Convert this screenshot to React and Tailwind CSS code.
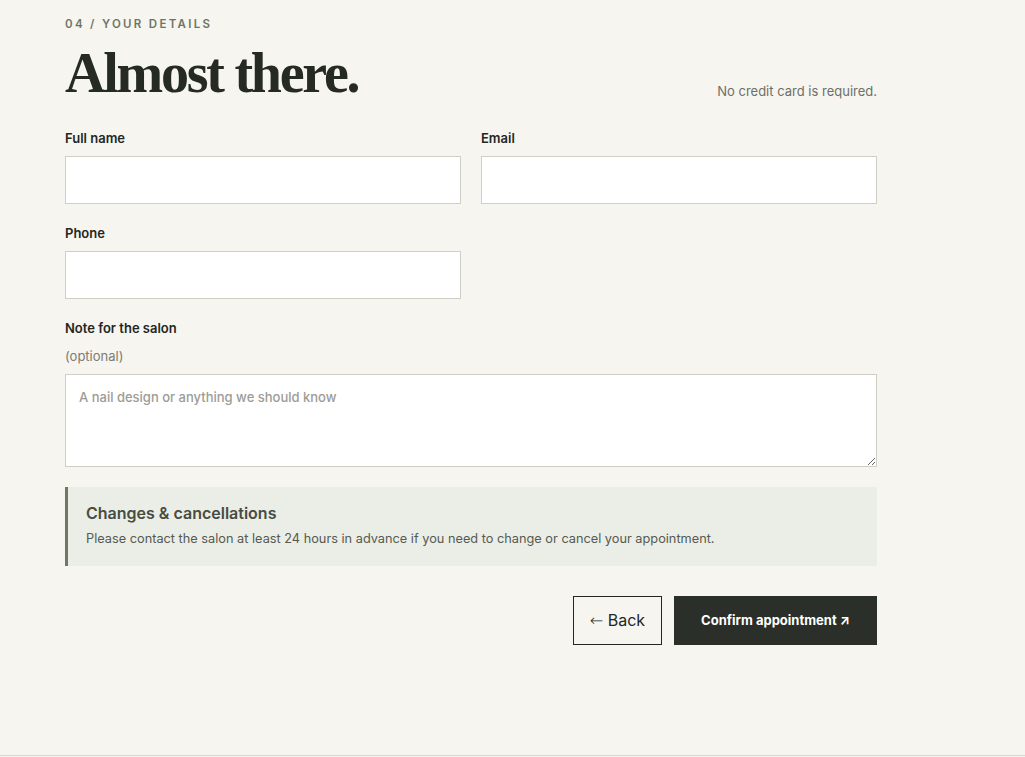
export default function App() {
  const sans = { fontFamily: "Inter, 'Open Sans', sans-serif" };
  return (
    <div className="min-h-[757px] bg-[#f6f5f0] flex flex-col" style={sans}>
      <main className="flex-1 pl-[65px] pt-[17px]">
        <div className="w-[812px]">
          <p className="text-[11.5px] font-semibold tracking-[0.2em] text-[#6e7566] leading-[14px]">
            04 / YOUR DETAILS
          </p>
          <div className="flex items-end justify-between mt-[13px]">
            <h1
              className="text-[56px] leading-[58px] font-bold text-[#252a23] tracking-[-0.04em]"
              style={{ fontFamily: "'Liberation Serif', 'DejaVu Serif', serif" }}
            >
              Almost there.
            </h1>
            <p className="text-[13px] text-[#6e6f67] mb-[1px]">No credit card is required.</p>
          </div>

          <div className="grid grid-cols-2 gap-x-[20px] mt-[26px]">
            <Field label="Full name" />
            <Field label="Email" />
          </div>
          <div className="grid grid-cols-2 gap-x-[20px] mt-[19px]">
            <Field label="Phone" />
          </div>

          <div className="mt-[21px]">
            <p className="text-[13px] font-semibold text-[#23271f] leading-[16px]">Note for the salon</p>
            <p className="text-[13px] text-[#7b7c74] leading-[16px] mt-[12px]">(optional)</p>
            <textarea
              placeholder="A nail design or anything we should know"
              className="mt-[10px] block w-full h-[93px] bg-white border border-[#cfcfc7] px-[13px] pt-[13px] pb-[14px] text-[13px] font-medium placeholder:text-[#9c9c96] outline-none"
            />
          </div>

          <div className="mt-[20px] bg-[#ebeee7] border-l-[3px] border-[#6c7a64] pl-[18px] pt-[16px] pb-[19px]">
            <p className="text-[16px] font-semibold text-[#474c42] leading-[20px]">Changes &amp; cancellations</p>
            <p className="text-[12.75px] text-[#565a50] leading-[16px] mt-[8px]">
              Please contact the salon at least 24 hours in advance if you need to change or cancel your appointment.
            </p>
          </div>

          <div className="flex justify-end gap-[12px] mt-[30px]">
            <button className="w-[89px] h-[49px] border border-[#23271f] text-[16px] text-[#23271f] bg-transparent">
              <span className="font-extralight" style={{ fontFamily: "'DejaVu Sans', sans-serif" }}>←</span> Back
            </button>
            <button className="w-[203px] h-[49px] bg-[#2a2f29] text-white text-[13px] font-bold">
              Confirm appointment ↗
            </button>
          </div>
        </div>
      </main>
      <footer className="h-[2px] border-t border-[#d8d9d0]" />
    </div>
  );
}

function Field({ label }) {
  return (
    <div>
      <p className="text-[13px] font-semibold text-[#23271f] leading-[16px] mt-[2px]">{label}</p>
      <input className="mt-[10px] block w-full h-[48px] bg-white border border-[#cfcfc7] outline-none" />
    </div>
  );
}
